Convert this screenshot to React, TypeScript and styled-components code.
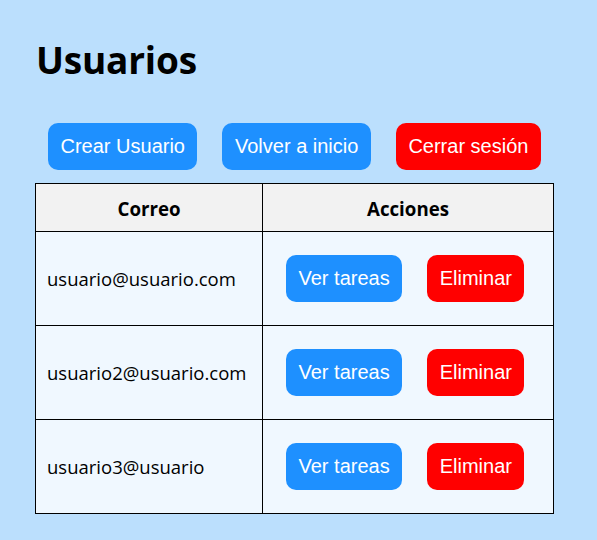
import React from "react";
import styled, { createGlobalStyle } from "styled-components";

const Global = createGlobalStyle`
  html, body { margin: 0; padding: 0; }
  body {
    background: #bbdffd;
    font-family: "Open Sans", "Noto Sans", sans-serif;
    color: #000;
  }
`;

const Page = styled.div`
  padding: 28px 44px 26px 35px;
  width: 518px;
`;

const Title = styled.h1`
  margin: 0 0 31px 1px;
  font-size: 37px;
  font-weight: 700;
  line-height: 64px;
  letter-spacing: -0.2px;
`;

const Toolbar = styled.div`
  display: flex;
  gap: 25px;
  padding-left: 13px;
  margin-bottom: 13px;
`;

const Button = styled.button<{ $variant?: "primary" | "danger" }>`
  font-family: "Liberation Sans", Arial, sans-serif;
  font-size: 20px;
  line-height: 23px;
  padding: 12px 12.5px;
  border: none;
  border-radius: 10px;
  color: #fff;
  background: ${(p) => (p.$variant === "danger" ? "#ff0000" : "#1e90ff")};
  cursor: pointer;
  white-space: nowrap;
`;

const Table = styled.table`
  border-collapse: collapse;
  width: 518px;
  table-layout: fixed;
`;

const HeadCell = styled.th<{ $w: number }>`
  width: ${(p) => p.$w}px;
  height: 48px;
  box-sizing: border-box;
  border: 1px solid #000;
  background: #f2f2f2;
  font-size: 18.7px;
  font-weight: 700;
  text-align: center;
  padding: 1px 0 0;
`;

const Cell = styled.td`
  border: 1px solid #000;
  background: #f0f8ff;
  height: 94px;
  box-sizing: border-box;
  padding: 0 11px;
  font-size: 18.5px;
  vertical-align: middle;
`;

const Actions = styled.div`
  display: flex;
  gap: 25px;
  padding-left: 12px;
`;

const users = ["usuario@usuario.com", "usuario2@usuario.com", "usuario3@usuario"];

export default function App() {
  return (
    <>
      <Global />
      <Page>
        <Title>Usuarios</Title>
        <Toolbar>
          <Button>Crear Usuario</Button>
          <Button>Volver a inicio</Button>
          <Button $variant="danger">Cerrar sesión</Button>
        </Toolbar>
        <Table>
          <thead>
            <tr>
              <HeadCell $w={227}>Correo</HeadCell>
              <HeadCell $w={291}>Acciones</HeadCell>
            </tr>
          </thead>
          <tbody>
            {users.map((u) => (
              <tr key={u}>
                <Cell>{u}</Cell>
                <Cell>
                  <Actions>
                    <Button>Ver tareas</Button>
                    <Button $variant="danger">Eliminar</Button>
                  </Actions>
                </Cell>
              </tr>
            ))}
          </tbody>
        </Table>
      </Page>
    </>
  );
}
